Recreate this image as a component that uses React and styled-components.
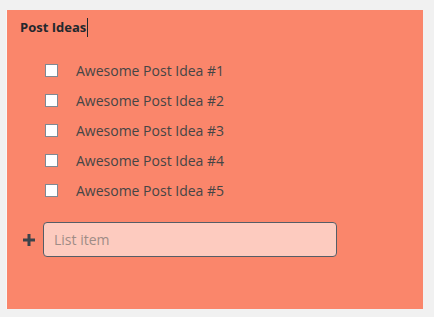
import React from "react";
import styled, { createGlobalStyle } from "styled-components";

const Global = createGlobalStyle`
  html, body { margin: 0; padding: 0; background: #f1f1f1; }
  body { font-family: "Open Sans", "Noto Sans", sans-serif; }
`;

const Panel = styled.div`
  box-sizing: border-box;
  margin: 10px 0 0 7px;
  width: 416px;
  height: 299px;
  background: #fa866b;
  padding: 7px 0 0 13px;
  box-shadow: -1px 0 0 #f7f7f7;
`;

const Title = styled.div`
  display: flex;
  align-items: center;
  font-size: 13px;
  font-weight: 700;
  color: #23282d;
  height: 20px;
  line-height: 20px;
`;

const Caret = styled.span`
  display: inline-block;
  width: 1px;
  height: 19px;
  background: #23282d;
  margin-left: 1px;
`;

const List = styled.ul`
  list-style: none;
  margin: 18px 0 0 0;
  padding: 0 0 0 25px;
`;

const Row = styled.li`
  display: flex;
  align-items: center;
  height: 30px;
`;

const Box = styled.span`
  box-sizing: border-box;
  width: 13px;
  height: 13px;
  background: #fff;
  border: 1px solid #7e8993;
  margin-right: 18px;
`;

const Label = styled.span`
  font-size: 14px;
  color: #454545;
`;

const AddRow = styled.div`
  display: flex;
  align-items: center;
  margin-top: 17px;
  margin-left: 3px;
`;

const Plus = styled.svg`
  width: 12px;
  height: 12px;
  margin-right: 8px;
`;

const Input = styled.input`
  box-sizing: border-box;
  width: 294px;
  height: 35px;
  background: #fdcbbf;
  border: 1px solid #555d66;
  border-radius: 4px;
  padding: 0 10px;
  font-family: "Open Sans", "Noto Sans", sans-serif;
  font-size: 14px;
  color: #333;
  outline: none;
  &::placeholder { color: #a08c86; }
`;

const items = [1, 2, 3, 4, 5].map((n) => `Awesome Post Idea #${n}`);

export default function App() {
  return (
    <>
      <Global />
      <Panel>
        <Title>
          Post Ideas<Caret />
        </Title>
        <List>
          {items.map((t) => (
            <Row key={t}>
              <Box />
              <Label>{t}</Label>
            </Row>
          ))}
        </List>
        <AddRow>
          <Plus viewBox="0 0 12 12">
            <rect x="4.5" y="0" width="3" height="12" fill="#3c434a" />
            <rect x="0" y="4.5" width="12" height="3" fill="#3c434a" />
          </Plus>
          <Input placeholder="List item" />
        </AddRow>
      </Panel>
    </>
  );
}
